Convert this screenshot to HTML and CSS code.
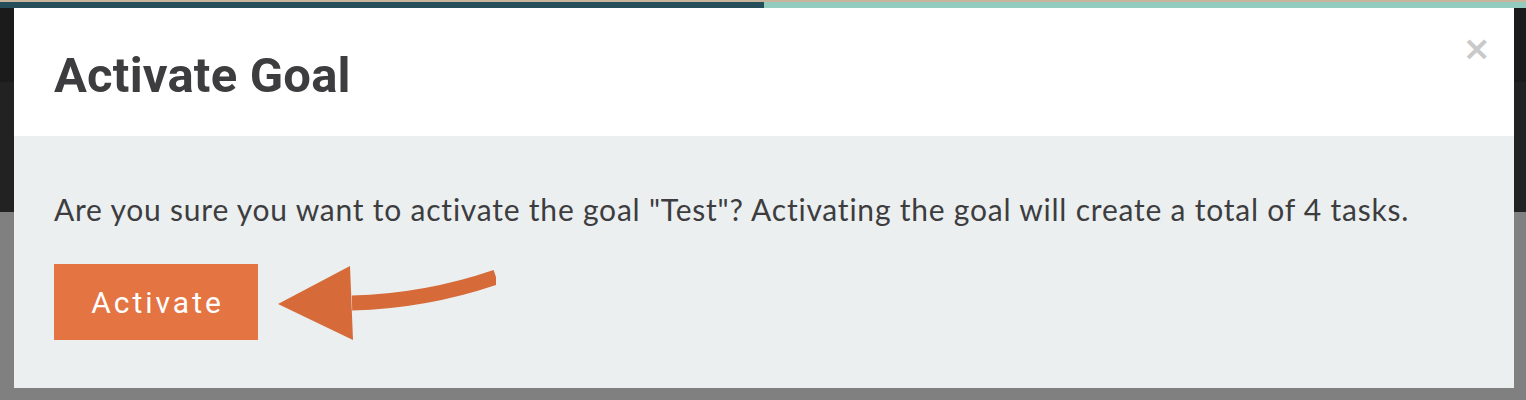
FILE: index.html
```html
<!DOCTYPE html>
<html>
<head>
<meta charset="utf-8">
<link rel="stylesheet" href="styles.css">
</head>
<body>
<div class="topline"></div>
<div class="progress"><div class="progress-done"></div><div class="progress-rest"></div></div>
<div class="stage">
  <div class="backdrop">
    <div class="bd-top"></div>
    <div class="bd-mid"></div>
    <div class="bd-low"></div>
  </div>
  <div class="modal">
    <div class="modal-header">
      <h1 class="modal-title">Activate Goal</h1>
      <button class="close" aria-label="Close">&#215;</button>
    </div>
    <div class="modal-body">
      <p class="message">Are you sure you want to activate the goal "Test"? Activating the goal will create a total of 4 tasks.</p>
      <div class="actions">
        <button class="activate">Activate</button>
        <svg class="arrow" width="240" height="90" viewBox="0 0 240 90">
          <path d="M96 38 Q170 36 240 12" fill="none" stroke="#d66a38" stroke-width="15"/>
          <polygon points="22,39 94,1 97,75" fill="#d66a38"/>
        </svg>
      </div>
    </div>
  </div>
</div>
</body>
</html>
```
FILE: styles.css
```css
* { box-sizing: border-box; }
html, body { margin: 0; padding: 0; }
body { width: 1526px; height: 400px; overflow: hidden; background: #808080; font-family: "Lato", sans-serif; }
.topline { height: 2px; background: #c8b59b; }
.progress { height: 6px; display: flex; }
.progress-done { width: 764px; background: #264e5a; }
.progress-rest { flex: 1; background: #93cbbf; }
.stage { position: relative; height: 392px; }
.backdrop { display: flex; flex-direction: column; height: 100%; }
.bd-top { height: 74px; background: #1b1b1b; }
.bd-mid { height: 130px; background: #222222; }
.bd-low { flex: 1; background: #808080; }
.modal { position: absolute; left: 14px; top: 0; width: 1500px; height: 380px; display: flex; flex-direction: column; }
.modal-header { height: 128px; background: #ffffff; position: relative; padding: 39px 40px 0 40px; }
.modal-title { margin: 0; font-family: "Roboto", sans-serif; font-weight: 700; font-size: 49px; line-height: 58px; color: #3d3d3f; letter-spacing: 0.2px; }
.close { position: absolute; right: 23px; top: 23px; border: 0; background: none; padding: 0; font-family: "DejaVu Sans", sans-serif; font-size: 34px; font-weight: 700; line-height: 34px; color: #c9c9c9; }
.modal-body { flex: 1; background: #ebeff0; padding: 54px 40px 0 40px; }
.message { margin: 0; font-family: "Lato", sans-serif; font-size: 30px; line-height: 38px; letter-spacing: 0.78px; color: #3d3d3f; }
.actions { display: flex; align-items: flex-start; margin-top: 36px; }
.activate { width: 204px; height: 76px; border: 0; background: #e57443; color: #ffffff; font-family: "Roboto", sans-serif; font-weight: 400; font-size: 30px; letter-spacing: 3px; padding: 0 0 0 3px; }
.arrow { display: block; margin-left: -2px; margin-top: 1px; }
```
